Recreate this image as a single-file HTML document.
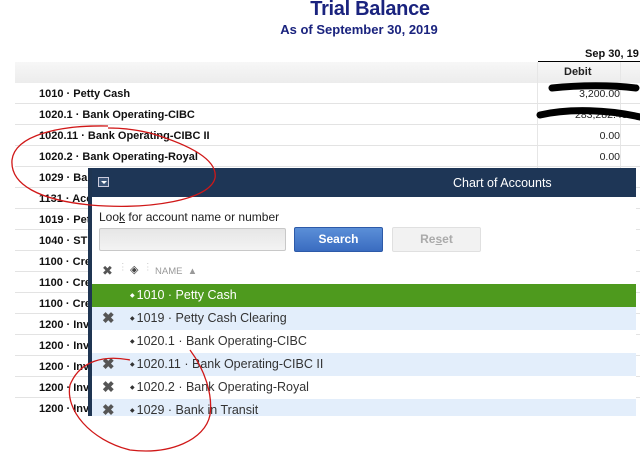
<!DOCTYPE html>
<html><head><style>
*{margin:0;padding:0;box-sizing:border-box}
body{width:640px;height:454px;overflow:hidden;background:#fff;position:relative;font-family:"Liberation Sans",Arial,sans-serif}
.t1{position:absolute;left:0;width:740px;text-align:center;top:-2px;font-size:20px;font-weight:bold;color:#1a237e;letter-spacing:-0.3px}
.t2{position:absolute;left:0;width:718px;text-align:center;top:22px;font-size:13px;font-weight:bold;color:#1a237e}
.sep{position:absolute;left:585px;top:48px;font-size:11px;font-weight:bold;color:#111}
.sepl{position:absolute;left:538px;top:61px;width:102px;height:1px;background:#000}
.hb{position:absolute;left:15px;top:62px;width:625px;height:21px;background:linear-gradient(#f7f7f7,#ececec)}
.deb{position:absolute;left:564px;top:66px;font-size:11px;font-weight:bold;color:#222}
.row{position:absolute;left:15px;width:625px;height:21px;border-bottom:1px solid #e3e3e3}
.row span{position:absolute;left:24px;top:5px;font-size:11px;font-weight:bold;color:#111}
.row b{position:absolute;left:560px;top:5px;width:45px;text-align:right;font-size:10.5px;font-weight:normal;color:#222}
.vl{position:absolute;top:62px;width:1px;height:354px;background:#e6e6e6}
.dlg{position:absolute;left:88px;top:168px;width:548px;height:248px;background:#fff;border-left:4px solid #1f3552;overflow:hidden}
.tb{position:absolute;left:0;top:0;width:548px;height:29px;background:#1e3656}
.tb .ti{position:absolute;left:361px;top:8px;color:#fff;font-size:12.5px}
.tb .ic{position:absolute;left:6px;top:9px;width:11px;height:10px;border:1px solid #ccd;background:#3d5678}
.tb .ic:after{content:"";position:absolute;left:2px;top:3px;border:3px solid transparent;border-top:3px solid #fff}
.lk{position:absolute;left:7px;top:42px;font-size:12px;color:#222}
.in{position:absolute;left:7px;top:60px;width:187px;height:23px;border:1px solid #c8c8c8;border-radius:2px;background:linear-gradient(#e6e6e6,#f3f3f3)}
.sb{position:absolute;left:202px;top:59px;width:89px;height:25px;border:1px solid #2d5aa8;border-radius:2px;background:linear-gradient(#5b8fd8,#3a6cc0);color:#fff;font-weight:bold;font-size:12px;text-align:center;line-height:23px}
.rb{position:absolute;left:300px;top:59px;width:89px;height:25px;border:1px solid #e0e0e0;border-radius:2px;background:#f2f2f2;color:#aaa;font-weight:bold;font-size:12px;text-align:center;line-height:23px}
.hd{position:absolute;top:98px;font-size:9.5px;color:#999}
.dr{position:absolute;left:0;width:548px;height:23px;font-size:12.5px;color:#333}
.dr .n{position:absolute;left:38px;top:4px}
.dr .x{position:absolute;left:10px;top:2px;font-size:15px;color:#555;font-weight:bold}
.dm{font-size:6px;vertical-align:2px;margin-right:2px}
</style></head><body>
<div class="t1">Trial Balance</div>
<div class="t2">As of September 30, 2019</div>
<div class="sep">Sep 30, 19</div>
<div class="sepl"></div>
<div class="hb"></div>
<div class="deb">Debit</div>
<div class="vl" style="left:537px"></div>
<div class="vl" style="left:620px"></div>
<div class="row" style="top:83px"><span>1010 · Petty Cash</span><b>3,200.00</b></div>
<div class="row" style="top:104px"><span>1020.1 · Bank Operating-CIBC</span><b>283,282.48</b></div>
<div class="row" style="top:125px"><span>1020.11 · Bank Operating-CIBC II</span><b>0.00</b></div>
<div class="row" style="top:146px"><span>1020.2 · Bank Operating-Royal</span><b>0.00</b></div>
<div class="row" style="top:167px"><span>1029 · Bank in Transit</span></div>
<div class="row" style="top:188px"><span>1131 · Accounts</span></div>
<div class="row" style="top:209px"><span>1019 · Petty</span></div>
<div class="row" style="top:230px"><span>1040 · ST</span></div>
<div class="row" style="top:251px"><span>1100 · Credit</span></div>
<div class="row" style="top:272px"><span>1100 · Credit</span></div>
<div class="row" style="top:293px"><span>1100 · Credit</span></div>
<div class="row" style="top:314px"><span>1200 · Inv</span></div>
<div class="row" style="top:335px"><span>1200 · Inv</span></div>
<div class="row" style="top:356px"><span>1200 · Inv</span></div>
<div class="row" style="top:377px"><span>1200 · Inv</span></div>
<div class="row" style="top:398px;border:none"><span>1200 · Inv</span></div>
<svg style="position:absolute;left:0;top:0" width="640" height="454">
<path d="M552 88 C580 85 612 85 636 88" stroke="#000" stroke-width="7" fill="none" stroke-linecap="round"/>
<path d="M540 115 C570 108 610 110 640 117" stroke="#000" stroke-width="7" fill="none" stroke-linecap="round"/>
</svg>
<div class="dlg">
<div class="tb"><div class="ic"></div><div class="ti">Chart of Accounts</div></div>
<div class="lk">Loo<u>k</u> for account name or number</div>
<div class="in"></div>
<div class="sb">Search</div>
<div class="rb">Re<u>s</u>et</div>
<div class="hd" style="left:10px;top:95px;color:#555;font-size:13px">✖</div>
<div class="hd" style="left:26px;top:94px;color:#ccc">⋮</div>
<div class="hd" style="left:38px;top:95px;color:#444;font-size:11px">◈</div>
<div class="hd" style="left:51px;top:94px;color:#ccc">⋮</div>
<div class="hd" style="left:63px">NAME &nbsp;▲</div>
<div class="dr" style="top:116px;background:#4e9a1e;color:#fff"><span class="n"><span class="dm">◆</span>1010 · Petty Cash</span></div>
<div class="dr" style="top:139px;background:#e3eefb"><span class="x">✖</span><span class="n"><span class="dm">◆</span>1019 · Petty Cash Clearing</span></div>
<div class="dr" style="top:162px"><span class="n"><span class="dm">◆</span>1020.1 · Bank Operating-CIBC</span></div>
<div class="dr" style="top:185px;background:#e3eefb"><span class="x">✖</span><span class="n"><span class="dm">◆</span>1020.11 · Bank Operating-CIBC II</span></div>
<div class="dr" style="top:208px"><span class="x">✖</span><span class="n"><span class="dm">◆</span>1020.2 · Bank Operating-Royal</span></div>
<div class="dr" style="top:231px;background:#e3eefb"><span class="x">✖</span><span class="n"><span class="dm">◆</span>1029 · Bank in Transit</span></div>
</div>
<svg style="position:absolute;left:0;top:0" width="640" height="454" fill="none" stroke="#d01818" stroke-width="1.3">
<path d="M108 126 C60 125 15 135 12 160 C10 185 40 200 90 205 C150 210 210 200 215 178 C218 160 190 145 150 133 C130 128 115 128 108 128"/>
<path d="M130 360 C105 355 80 360 70 385 C65 410 90 440 130 450 C170 455 205 440 210 415 C213 395 205 370 190 350"/>
</svg>
</body></html>
